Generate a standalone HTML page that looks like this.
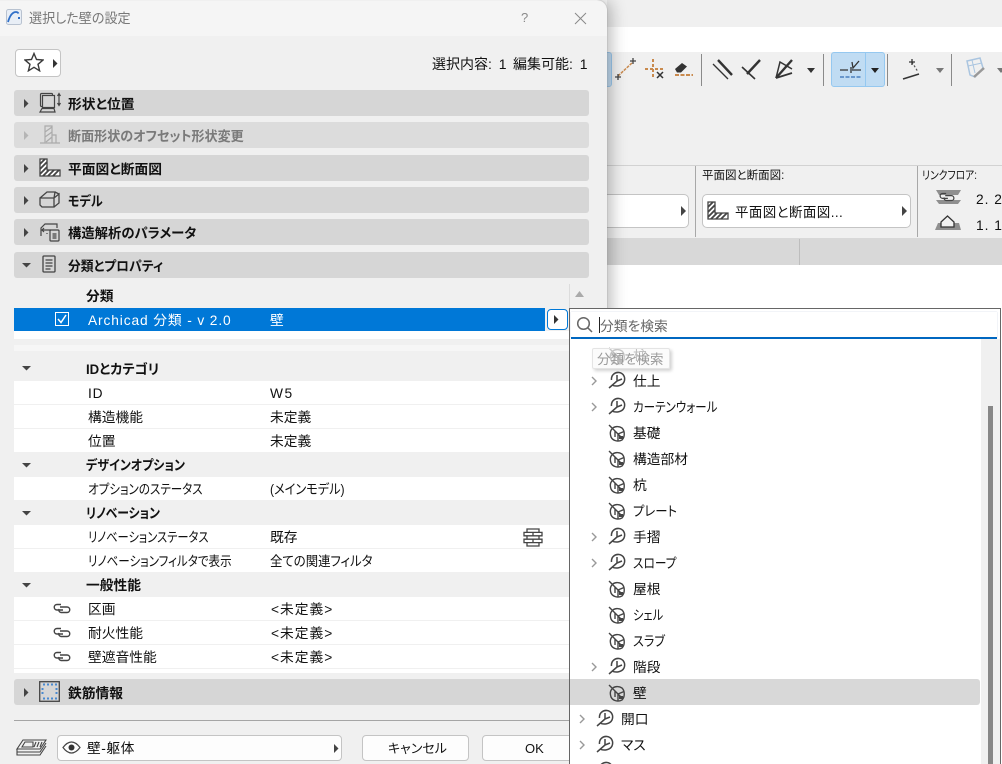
<!DOCTYPE html>
<html lang="ja"><head><meta charset="utf-8"><title>選択した壁の設定</title>
<style>
html,body{margin:0;padding:0;width:1002px;height:764px;overflow:hidden}
body{background:#fff;font-family:"Liberation Sans","Noto Sans CJK JP",sans-serif;font-size:13.75px;color:#111;font-feature-settings:"palt"}
#p{position:absolute;left:0;top:0;width:1002px;height:764px;overflow:hidden}
#p div,#p svg{position:absolute}
.t{white-space:nowrap;line-height:20px;height:20px;margin-top:1px;transform-origin:0 50%}
.bar{left:14px;width:575px;height:26px;background:#d6d6d6;border-radius:3px}
.bt{left:68px;font-weight:700;font-size:13.75px;margin-top:2px}
.row{left:14px;width:555px;background:#fff}
.hd{left:14px;width:555px;background:#f0f0f0}
.tl{left:88px;margin-top:2px}.tv{left:270px;margin-top:2px}
.b{font-weight:700;left:86px;margin-top:2px}
.btn{background:#fdfdfd;border:1px solid #c4c4c4;border-radius:4px;box-sizing:border-box}
</style></head><body>
<svg width="0" height="0" style="position:absolute">
<defs>
<symbol id="leaf" viewBox="0 0 18 18"><g fill="none" stroke="#444" stroke-width="1.400"><path d="M1 1 5 5"/><path d="M4 5C6 2 11 2 14 4 17 7 17 13 14 16 10 18 5 17 3 13 2 10 2 7 4 5Z"/><path d="M5 5 15 15M10 10V16.500M10 10 16 7.500M7 7V13"/></g><path d="M11 12h4v3h-4Z" fill="#444"/></symbol>
<symbol id="branch" viewBox="0 0 18 18"><g fill="none" stroke="#444" stroke-width="1.500"><path d="M1 17 9 10M9 4V10L14 8M4 14C8 16 14 15 16 11 18 6 15 2 11 1.500 7 1 3 4 3.500 9"/></g></symbol>
<symbol id="hatch" viewBox="0 0 22 19"><path d="M1 1h7v11h13v6H1Z" fill="#fff" stroke="#444" stroke-width="1.300"/><path d="M1 6 6 1M1 11 8 4M1 16 8 9M4 18 10 12M9 18 15 12M14 18 20 12" stroke="#444" stroke-width="1.800"/></symbol>
<symbol id="link" viewBox="0 0 18 11"><g fill="none" stroke="#444" stroke-width="1.400"><path d="M8 1.500H4a2.500 2.500 0 0 0 0 5.500H10"/><path d="M7 4H14a2.700 2.700 0 0 1 0 5.500H8A2.500 2.500 0 0 1 6 6"/></g></symbol>
</defs></svg>
<div id="p">
<!-- background app -->
<div style="left:607px;top:0;width:395px;height:27px;background:#f0f0f0"></div>
<div style="left:607px;top:52px;width:395px;height:113px;background:#f0f0f0"></div>
<div style="left:607px;top:165px;width:395px;height:1px;background:#d2d2d2"></div>
<div style="left:607px;top:166px;width:395px;height:72px;background:#f0f0f0"></div>
<div style="left:607px;top:238px;width:395px;height:27px;background:#d8d8d8"></div>
<div style="left:799px;top:239px;width:1px;height:26px;background:#bdbdbd"></div>
<div style="left:695px;top:166px;width:1px;height:71px;background:#a8a8a8"></div>
<div style="left:917px;top:166px;width:1px;height:71px;background:#a8a8a8"></div>

<!-- toolbar -->
<div style="left:600px;top:52px;width:12px;height:35px;background:#c3ddf3;border:1px solid #9cc9ee;border-radius:3px;box-sizing:border-box"></div>
<svg style="left:610px;top:45px" width="200" height="50" fill="none">
<path d="M8 31 23 17" stroke="#c98a4e" stroke-width="1.500" stroke-dasharray="3 1"/>
<path d="M5 32h6M8 29v6M20 16h6M23 13v6" stroke="#444" stroke-width="1.300"/>
<path d="M43 14v20M35 24h18" stroke="#c98a4e" stroke-width="2" stroke-dasharray="3 2"/>
<path d="M47 27 53 33M53 27 47 33" stroke="#333" stroke-width="1.500"/>
<path d="M65 24 72 18l5 3.500-6 6h-4Z" fill="#333"/><path d="M65 30h18" stroke="#c98a4e" stroke-width="2" stroke-dasharray="4 1.500"/>
<path d="M108 15 122 30" stroke="#333" stroke-width="2.400"/><path d="M103 19 118 34" stroke="#333" stroke-width="1.300"/>
<path d="M132 22 145 34" stroke="#333" stroke-width="1.600"/><path d="M137 29 150 15" stroke="#333" stroke-width="2.400"/>
<path d="M166 33 182 15" stroke="#333" stroke-width="2.400"/><path d="M166 33 170 17 182 24" stroke="#333" stroke-width="1.500"/>
<path d="M166 33 182 28" stroke="#333" stroke-width="1.800"/>
</svg>
<div style="left:701px;top:54px;width:1px;height:32px;background:#8a8a8a"></div>
<div style="left:823px;top:54px;width:1px;height:32px;background:#8a8a8a"></div>
<div style="left:887px;top:54px;width:1px;height:32px;background:#8a8a8a"></div>
<div style="left:951px;top:54px;width:1px;height:32px;background:#8a8a8a"></div>
<svg style="left:807px;top:68px" width="10" height="6"><path d="M0 0h8L4 5Z" fill="#333"/></svg>
<div style="left:831px;top:52px;width:54px;height:35px;background:#c0dcf3;border:1px solid #95c8f0;border-radius:3px;box-sizing:border-box"></div>
<div style="left:865px;top:53px;width:1px;height:33px;background:#95c8f0"></div>
<svg style="left:838px;top:58px" width="24" height="24" fill="none"><path d="M2 12h8M13 9v6M14 12h9" stroke="#333" stroke-width="1.300"/><path d="M14 4 15 10 21 3" stroke="#333" stroke-width="1.300"/><path d="M2 19h21" stroke="#4a80c0" stroke-width="1.500" stroke-dasharray="4 1.500"/></svg>
<svg style="left:871px;top:68px" width="10" height="6"><path d="M0 0h8L4 5Z" fill="#222"/></svg>
<svg style="left:900px;top:56px" width="30" height="28" fill="none"><path d="M3 23 19 18" stroke="#333" stroke-width="1.500"/><path d="M12 6 18 16" stroke="#555" stroke-dasharray="2 2" stroke-width="1.200"/><path d="M9 6h6M12 3v6" stroke="#333" stroke-width="1.300"/></svg>
<svg style="left:936px;top:68px" width="10" height="6"><path d="M0 0h8L4 5Z" fill="#777"/></svg>
<svg style="left:965px;top:57px" width="22" height="24" fill="none"><path d="M2 4 15 1l3 10-8 9-5-2Z" stroke="#aac5e0" stroke-width="1.500"/><path d="M7 3l3 13M3 9l14-3" stroke="#aac5e0"/><path d="M9 20 19 11" stroke="#999" stroke-width="2.500"/></svg>
<svg style="left:997px;top:68px" width="5" height="6"><path d="M0 0h8L4 5Z" fill="#777"/></svg>

<div class="t" style="left:702px;top:165px;font-size:11.500px">平面図と断面図:</div>
<div class="t" style="left:922px;top:165px;font-size:11.500px;transform:scaleX(.85)">リンクフロア:</div>
<div class="btn" style="left:600px;top:194px;width:89px;height:34px;border-radius:0 5px 5px 0;background:#fff"></div>
<svg style="left:681px;top:206px" width="6" height="10"><path d="M0 0 5 5 0 10Z" fill="#444"/></svg>
<div class="btn" style="left:702px;top:194px;width:209px;height:34px;border-radius:5px;background:#fff"></div>
<svg style="left:707px;top:201px" width="22" height="19"><use href="#hatch"/></svg>
<div class="t" style="left:735px;top:202px;font-size:13.500px;letter-spacing:.4px">平面図と断面図...</div>
<svg style="left:902px;top:206px" width="6" height="10"><path d="M0 0 5 5 0 10Z" fill="#444"/></svg>
<svg style="left:934px;top:189px" width="28" height="16"><path d="M2 1h25l-3 5H5Z" fill="#8f8f8f"/><path d="M2 11h25l-3 4H5Z" fill="#8f8f8f"/><use href="#link" x="5" y="3" width="16" height="10"/></svg>
<svg style="left:934px;top:214px" width="28" height="18"><path d="M4 9h21l2 7H1Z" fill="#8f8f8f"/><path d="M7 8 13.500 2 20 8v5H7Z" fill="#f0f0f0" stroke="#333" stroke-width="1.300"/></svg>
<div class="t" style="left:976px;top:189px;letter-spacing:1px">2. 2</div>
<div class="t" style="left:976px;top:215px;letter-spacing:1px">1. 1</div>

<!-- dialog -->
<div style="left:0;top:0;width:607px;height:790px;background:#f0f0f0;border-radius:0 10px 0 0;box-shadow:0 0 1px #888,4px 0 16px rgba(0,0,0,.28)"></div>
<div style="left:0;top:1px;width:607px;height:35px;background:#f5f5f5;border-radius:0 10px 0 0"></div>
<svg style="left:6px;top:9px" width="17" height="17"><rect x=".5" y=".5" width="15" height="15" rx="2" fill="#e8eef6" stroke="#b8c2d0"/><path d="M2 13C4 6 7 3 10 3c1 0 2 .5 2.500 1.500" fill="none" stroke="#2f6fc8" stroke-width="1.800"/><rect x="12" y="8" width="2" height="2" fill="#2f6fc8"/></svg>
<div class="t" style="left:29px;top:8px;color:#777;font-size:13.500px;transform:scaleX(.97)">選択した壁の設定</div>
<div class="t" style="left:521px;top:7px;color:#8a8a8a;font-size:13px">?</div>
<svg style="left:574px;top:12px" width="13" height="13"><path d="M1 1 12 12M12 1 1 12" stroke="#888" stroke-width="1"/></svg>

<div class="btn" style="left:15px;top:49px;width:46px;height:28px;background:#fff"></div>
<svg style="left:24px;top:52px" width="20" height="20"><path d="M10 1.500 12.500 7.500 19 8 14 12.300 15.600 18.800 10 15.300 4.400 18.800 6 12.300 1 8 7.500 7.500Z" fill="#fff" stroke="#3a3a3a" stroke-width="1.400"/></svg>
<svg style="left:53px;top:59px" width="5" height="9"><path d="M0 0 4.500 4.500 0 9Z" fill="#333"/></svg>
<div class="t" style="left:432px;top:53px;font-size:14px;word-spacing:3px">選択内容: 1</div>
<div class="t" style="left:513px;top:53px;font-size:14px;word-spacing:3px">編集可能: 1</div>

<!-- section bars -->
<div class="bar" style="top:90px"></div>
<svg style="left:24px;top:99px" width="6" height="9"><path d="M0 0 4.500 4.500 0 9Z" fill="#444"/></svg>
<svg style="left:39px;top:92px" width="23" height="22" fill="none" stroke="#444" stroke-width="1.200"><rect x="1.500" y="1.500" width="12" height="13" rx="1"/><rect x="3.500" y="3.500" width="12" height="12" fill="#d6d6d6"/><path d="M1 20 3 16.500H15L16 20Z"/><path d="M20 2v11M18.500 4 20 1.500 21.500 4M18.500 11 20 13.500 21.500 11"/></svg>
<div class="t bt" style="top:93px">形状と位置</div>

<div class="bar" style="top:122px;background:#dcdcdc"></div>
<svg style="left:24px;top:131px" width="6" height="9"><path d="M0 0 4.500 4.500 0 9Z" fill="#b5b5b5"/></svg>
<svg style="left:39px;top:124px" width="22" height="22" fill="none" stroke="#aaa" stroke-width="1.200"><path d="M1 19h20M6 19V2h7v17M13 19V11h4v8M6 8 13 3M6 13 13 8M7 18 13 13"/></svg>
<div class="t bt" style="top:125px;color:#7a7a7a;transform:scaleX(.95)">断面形状のオフセット形状変更</div>

<div class="bar" style="top:155px"></div>
<svg style="left:24px;top:164px" width="6" height="9"><path d="M0 0 4.500 4.500 0 9Z" fill="#444"/></svg>
<svg style="left:39px;top:158px" width="22" height="19"><use href="#hatch"/></svg>
<div class="t bt" style="top:158px">平面図と断面図</div>

<div class="bar" style="top:187px"></div>
<svg style="left:24px;top:196px" width="6" height="9"><path d="M0 0 4.500 4.500 0 9Z" fill="#444"/></svg>
<svg style="left:39px;top:190px" width="22" height="19" fill="none" stroke="#444" stroke-width="1.300"><path d="M1 8H15V17H3L1 15ZM1 8 8 2H16L15 8M15 8 20 4V13L15 17M16 2 20 4"/></svg>
<div class="t bt" style="top:190px;transform:scaleX(.88)">モデル</div>

<div class="bar" style="top:219px"></div>
<svg style="left:24px;top:228px" width="6" height="9"><path d="M0 0 4.500 4.500 0 9Z" fill="#444"/></svg>
<svg style="left:40px;top:222px" width="21" height="20" fill="none" stroke="#444" stroke-width="1.200"><path d="M1 14V6L5 2H17V6M1 8h10M4 6 2 8l2 2M7 12v-1"/><rect x="10" y="8" width="9" height="11" rx="1"/><path d="M12.500 12h4M12.500 14h4M12.500 16h4"/></svg>
<div class="t bt" style="top:222px;transform:scaleX(.97)">構造解析のパラメータ</div>

<div class="bar" style="top:252px"></div>
<svg style="left:22px;top:263px" width="9" height="5"><path d="M0 0H9L4.500 4.500Z" fill="#444"/></svg>
<svg style="left:42px;top:255px" width="15" height="19" fill="none" stroke="#444" stroke-width="1.300"><rect x="1" y="1" width="12" height="16" rx="1"/><path d="M3.500 5h7M3.500 8h7M3.500 11h7M3.500 14h5"/></svg>
<div class="t bt" style="top:255px;transform:scaleX(.93)">分類とプロパティ</div>

<!-- table -->
<div class="t b" style="top:285px">分類</div>
<svg style="left:575px;top:291px" width="9" height="6"><path d="M4.500 0 9 6H0Z" fill="#aaa"/></svg>
<div style="left:569px;top:284px;width:1px;height:24px;background:#dcdcdc"></div>
<div style="left:14px;top:308px;width:531px;height:23px;background:#0078d7"></div>
<svg style="left:55px;top:312px" width="14" height="14" fill="none" stroke="#fff"><rect x=".5" y=".5" width="13" height="13"/><path d="M3 7 6 10.500 11 3" stroke-width="1.500"/></svg>
<div class="t" style="left:88px;top:310px;color:#fff;letter-spacing:.88px">Archicad 分類 - v 2.0</div>
<div class="t" style="left:270px;top:310px;color:#fff">壁</div>
<div style="left:547px;top:309px;width:21px;height:21px;box-sizing:border-box;background:#fff;border:1px solid #0078d7;border-radius:4px"></div>
<svg style="left:554px;top:315px" width="6" height="9"><path d="M0 0 4.500 4.500 0 9Z" fill="#333"/></svg>
<div class="row" style="top:331px;height:8px"></div>
<div style="left:14px;top:345px;width:555px;height:6px;background:#f6f6f6"></div>

<div class="hd" style="top:351px;height:30px"></div>
<svg style="left:22px;top:366px" width="9" height="5"><path d="M0 0H9L4.500 4.500Z" fill="#444"/></svg>
<div class="t b" style="top:358px;transform:scaleX(.96)">IDとカテゴリ</div>
<div class="row" style="top:381px;height:23px"></div>
<div class="t tl" style="top:382px;letter-spacing:.8px">ID</div><div class="t tv" style="top:382px;letter-spacing:1.500px">W5</div>
<div class="row" style="top:405px;height:23px"></div>
<div class="t tl" style="top:406px">構造機能</div><div class="t tv" style="top:406px">未定義</div>
<div class="row" style="top:429px;height:23px"></div>
<div class="t tl" style="top:430px">位置</div><div class="t tv" style="top:430px">未定義</div>

<svg style="left:22px;top:463px" width="9" height="5"><path d="M0 0H9L4.500 4.500Z" fill="#444"/></svg>
<div class="t b" style="top:454px;transform:scaleX(.87)">デザインオプション</div>
<div class="row" style="top:477px;height:23px"></div>
<div class="t tl" style="top:478px;transform:scaleX(.84)">オプションのステータス</div><div class="t tv" style="top:478px;transform:scaleX(.885)">(メインモデル)</div>

<svg style="left:22px;top:511px" width="9" height="5"><path d="M0 0H9L4.500 4.500Z" fill="#444"/></svg>
<div class="t b" style="top:502px;transform:scaleX(.86)">リノベーション</div>
<div class="row" style="top:525px;height:23px"></div>
<div class="t tl" style="top:526px;transform:scaleX(.82)">リノベーションステータス</div><div class="t tv" style="top:526px">既存</div>
<svg style="left:523px;top:528px" width="20" height="19" fill="#fff" stroke="#444" stroke-width="1.300"><path d="M4 1h12v3.400H4ZM1 4.400h9v3.400H1ZM10 4.400h9v3.400h-9ZM4 7.800h12v3.400H4ZM1 11.200h9v3.400H1ZM10 11.200h9v3.400h-9ZM4 14.600h12V18H4Z"/></svg>
<div class="row" style="top:549px;height:23px"></div>
<div class="t tl" style="top:550px;transform:scaleX(.84)">リノベーションフィルタで表示</div><div class="t tv" style="top:550px;transform:scaleX(.9)">全ての関連フィルタ</div>

<svg style="left:22px;top:583px" width="9" height="5"><path d="M0 0H9L4.500 4.500Z" fill="#444"/></svg>
<div class="t b" style="top:574px">一般性能</div>
<div class="row" style="top:597px;height:23px"></div>
<svg style="left:53px;top:603px" width="18" height="11"><use href="#link"/></svg>
<div class="t tl" style="top:598px">区画</div><div class="t tv" style="top:598px;left:271px;letter-spacing:1px">&lt;未定義&gt;</div>
<div class="row" style="top:621px;height:23px"></div>
<svg style="left:53px;top:627px" width="18" height="11"><use href="#link"/></svg>
<div class="t tl" style="top:622px">耐火性能</div><div class="t tv" style="top:622px;left:271px;letter-spacing:1px">&lt;未定義&gt;</div>
<div class="row" style="top:645px;height:23px"></div>
<svg style="left:53px;top:651px" width="18" height="11"><use href="#link"/></svg>
<div class="t tl" style="top:646px">壁遮音性能</div><div class="t tv" style="top:646px;left:271px;letter-spacing:1px">&lt;未定義&gt;</div>
<div class="row" style="top:669px;height:4px"></div>

<div class="bar" style="top:679px"></div>
<svg style="left:24px;top:688px" width="6" height="9"><path d="M0 0 4.500 4.500 0 9Z" fill="#444"/></svg>
<svg style="left:39px;top:681px" width="21" height="21" fill="none"><rect x=".7" y=".7" width="19.600" height="19.600" stroke="#444" stroke-width="1.300"/><path d="M4 3.500h14M3.500 7v8M17.500 7v8M4 17.500h14" stroke="#4a8ad0" stroke-width="2" stroke-dasharray="2 2"/></svg>
<div class="t bt" style="top:682px">鉄筋情報</div>

<div style="left:14px;top:720px;width:575px;height:1px;background:#a5a5a5"></div>
<svg style="left:16px;top:739px" width="31" height="20" fill="none" stroke="#444" stroke-width="1.100"><path d="M7 1h23l-6 9H1Z" fill="#f0f0f0"/><path d="M1 10v3h23l6-9M1 13v3h23l6-9"/><path d="M9 3h8v5H6ZM20 3l-2 5M23 3l-2 5M26 3l-2 5"/></svg>
<div class="btn" style="left:57px;top:735px;width:285px;height:26px;background:#fdfdfd"></div>
<svg style="left:62px;top:741px" width="19" height="13" fill="none"><path d="M1 6.500C4 2.500 6.500 1 9.500 1s5.500 1.500 8.500 5.500C15 10.500 12.500 12 9.500 12S4 10.500 1 6.500Z" stroke="#444" stroke-width="1.200"/><circle cx="9.500" cy="6.500" r="3" fill="#333"/></svg>
<div class="t" style="left:87px;top:738px;letter-spacing:.5px">壁-躯体</div>
<svg style="left:334px;top:744px" width="5" height="9"><path d="M0 0 4.500 4.500 0 9Z" fill="#444"/></svg>
<div class="btn" style="left:362px;top:735px;width:107px;height:26px"></div>
<div class="t" style="left:388px;top:738px;font-size:13px">キャンセル</div>
<div class="btn" style="left:482px;top:735px;width:107px;height:26px"></div>
<div class="t" style="left:525px;top:738px;font-size:13px">OK</div>

<!-- popup -->
<div style="left:569px;top:308px;width:432px;height:470px;background:#fff;border:1px solid #666;box-sizing:border-box"></div>
<div style="left:981px;top:339px;width:19px;height:430px;background:#f0f0f0"></div>
<div style="left:988px;top:406px;width:5px;height:360px;background:#878787"></div>
<div style="left:571px;top:312px;width:426px;height:26px;background:#fff;box-shadow:0 0 1px #bcc8d8"></div>
<div style="left:571px;top:337px;width:426px;height:2px;background:#0067c0"></div>
<svg style="left:576px;top:316px" width="18" height="18" fill="none" stroke="#666" stroke-width="1.500"><circle cx="7.500" cy="7.500" r="5.800"/><path d="M11.800 11.800 16 16"/></svg>
<div style="left:599px;top:317px;width:1px;height:16px;background:#222"></div>
<div class="t" style="left:600px;top:316px;color:#666">分類を検索</div>

<svg style="left:608px;top:347px;opacity:.7" width="18" height="18"><use href="#leaf"/></svg>
<div class="t" style="left:633px;top:345px;color:#666">柱</div>
<div style="left:592px;top:348px;width:78px;height:21px;background:rgba(248,248,248,.6);border:1px solid #e4e4e4;border-radius:2px;box-sizing:border-box;box-shadow:2px 2px 3px rgba(0,0,0,.18)"></div>
<div class="t" style="left:597px;top:349px;color:#9a9a9a;font-size:13.500px">分類を検索</div>

<svg style="left:590px;top:376px" width="8" height="10" fill="none" stroke="#999" stroke-width="1.400"><path d="M2 1 6 5 2 9"/></svg>
<svg style="left:608px;top:371px" width="18" height="18"><use href="#branch"/></svg>
<div class="t" style="left:633px;top:371px">仕上</div>
<svg style="left:590px;top:402px" width="8" height="10" fill="none" stroke="#999" stroke-width="1.400"><path d="M2 1 6 5 2 9"/></svg>
<svg style="left:608px;top:397px" width="18" height="18"><use href="#branch"/></svg>
<div class="t" style="left:633px;top:397px;transform:scaleX(.84)">カーテンウォール</div>
<svg style="left:608px;top:424px" width="18" height="18"><use href="#leaf"/></svg>
<div class="t" style="left:633px;top:423px">基礎</div>
<svg style="left:608px;top:450px" width="18" height="18"><use href="#leaf"/></svg>
<div class="t" style="left:633px;top:449px">構造部材</div>
<svg style="left:608px;top:476px" width="18" height="18"><use href="#leaf"/></svg>
<div class="t" style="left:633px;top:475px">杭</div>
<svg style="left:608px;top:502px" width="18" height="18"><use href="#leaf"/></svg>
<div class="t" style="left:633px;top:501px;transform:scaleX(.9)">プレート</div>
<svg style="left:590px;top:532px" width="8" height="10" fill="none" stroke="#999" stroke-width="1.400"><path d="M2 1 6 5 2 9"/></svg>
<svg style="left:608px;top:527px" width="18" height="18"><use href="#branch"/></svg>
<div class="t" style="left:633px;top:527px">手摺</div>
<svg style="left:590px;top:558px" width="8" height="10" fill="none" stroke="#999" stroke-width="1.400"><path d="M2 1 6 5 2 9"/></svg>
<svg style="left:608px;top:553px" width="18" height="18"><use href="#branch"/></svg>
<div class="t" style="left:633px;top:553px;transform:scaleX(.85)">スロープ</div>
<svg style="left:608px;top:580px" width="18" height="18"><use href="#leaf"/></svg>
<div class="t" style="left:633px;top:579px">屋根</div>
<svg style="left:608px;top:606px" width="18" height="18"><use href="#leaf"/></svg>
<div class="t" style="left:633px;top:605px;transform:scaleX(.82)">シェル</div>
<svg style="left:608px;top:632px" width="18" height="18"><use href="#leaf"/></svg>
<div class="t" style="left:633px;top:631px;transform:scaleX(.88)">スラブ</div>
<svg style="left:590px;top:662px" width="8" height="10" fill="none" stroke="#999" stroke-width="1.400"><path d="M2 1 6 5 2 9"/></svg>
<svg style="left:608px;top:657px" width="18" height="18"><use href="#branch"/></svg>
<div class="t" style="left:633px;top:657px">階段</div>
<div style="left:570px;top:679px;width:410px;height:26px;background:#d8d8d8;border-radius:0 3px 3px 0"></div>
<svg style="left:608px;top:684px" width="18" height="18"><use href="#leaf"/></svg>
<div class="t" style="left:633px;top:683px">壁</div>
<svg style="left:578px;top:714px" width="8" height="10" fill="none" stroke="#999" stroke-width="1.400"><path d="M2 1 6 5 2 9"/></svg>
<svg style="left:596px;top:709px" width="18" height="18"><use href="#branch"/></svg>
<div class="t" style="left:621px;top:709px">開口</div>
<svg style="left:578px;top:740px" width="8" height="10" fill="none" stroke="#999" stroke-width="1.400"><path d="M2 1 6 5 2 9"/></svg>
<svg style="left:596px;top:735px" width="18" height="18"><use href="#branch"/></svg>
<div class="t" style="left:621px;top:735px">マス</div>
<svg style="left:596px;top:761px" width="18" height="18"><use href="#branch"/></svg>
</div>
</body></html>
